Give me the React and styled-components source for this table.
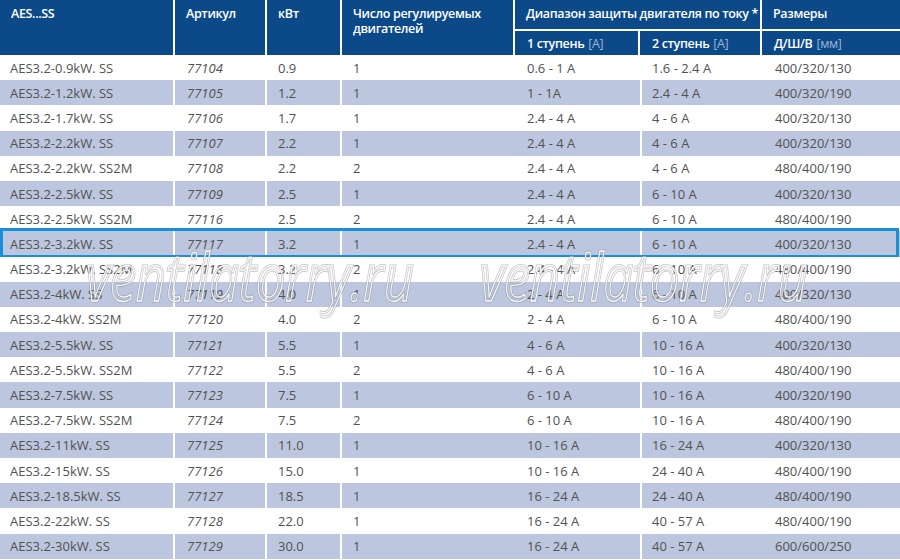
import React from "react";
import styled, { createGlobalStyle } from "styled-components";

const GlobalStyle = createGlobalStyle`
  html, body {
    margin: 0;
    padding: 0;
    background: #ffffff;
  }
  body {
    font-family: "Open Sans", "Liberation Sans", sans-serif;
  }
`;

const Page = styled.div`
  position: relative;
  width: 900px;
  height: 560px;
  overflow: hidden;
  background: #ffffff;
`;

const Header = styled.div`
  display: grid;
  grid-template-columns: 173px 90px 73px 171px 123px 120px 138px;
  grid-template-rows: 29px 24px;
  column-gap: 2px;
  row-gap: 2px;
  background: #ffffff;
`;

const HeadCell = styled.div`
  background: #0c4988;
  color: #ffffff;
  font-size: 12.5px;
  font-weight: 600;
  letter-spacing: -0.35px;
  line-height: 15px;
  padding: ${(p) => (p.sub ? "0 0 0 12px" : "6px 0 0 11px")};
  display: flex;
  align-items: ${(p) => (p.sub ? "center" : "flex-start")};
  grid-column: ${(p) => p.col || "auto"};
  grid-row: ${(p) => p.row || "auto"};
  white-space: ${(p) => (p.wrap ? "normal" : "nowrap")};
`;

const Unit = styled.span`
  color: #9fb5d6;
  font-weight: 400;
  margin-left: 4px;
`;

const Body = styled.div`
  display: flex;
  flex-direction: column;
`;

const Row = styled.div`
  position: relative;
  display: grid;
  grid-template-columns: 173px 92px 75px 175px 125px 124px 136px;
  height: 25.2px;
  background: ${(p) => (p.shade ? "#bcc6de" : "#ffffff")};

  &::after {
    content: "";
    display: ${(p) => (p.active ? "block" : "none")};
    position: absolute;
    top: -3px;
    bottom: -1px;
    left: 0;
    right: 1px;
    border: 3px solid #1a8fd9;
    pointer-events: none;
  }
`;

const Cell = styled.div`
  display: flex;
  align-items: center;
  padding-left: ${(p) => p.pad || 11}px;
  border-left: ${(p) => (p.line ? "2px solid #ffffff" : "none")};
  color: #525252;
  font-size: 13px;
  font-style: ${(p) => (p.italic ? "italic" : "normal")};
  white-space: nowrap;
`;

const Watermark = styled.div`
  position: absolute;
  top: 255px;
  left: ${(p) => p.x}px;
  font-family: "Open Sans", sans-serif;
  font-style: italic;
  font-size: 52px;
  line-height: 52px;
  color: transparent;
  -webkit-text-stroke: 2.4px rgba(140, 140, 140, 0.5);
  transform: scaleY(1.28);
  transform-origin: 0 46px;
  pointer-events: none;
  white-space: nowrap;

  &::after {
    content: attr(data-text);
    position: absolute;
    left: 0;
    top: 0;
    -webkit-text-stroke: 1px rgba(255, 255, 255, 0.95);
  }
`;

const rows = [
  ["AES3.2-0.9kW. SS", "77104", "0.9", "1", "0.6 - 1 A", "1.6 - 2.4 A", "400/320/130"],
  ["AES3.2-1.2kW. SS", "77105", "1.2", "1", "1 - 1A", "2.4 - 4 A", "400/320/190"],
  ["AES3.2-1.7kW. SS", "77106", "1.7", "1", "2.4 - 4 A", "4 - 6 A", "400/320/130"],
  ["AES3.2-2.2kW. SS", "77107", "2.2", "1", "2.4 - 4 A", "4 - 6 A", "400/320/130"],
  ["AES3.2-2.2kW. SS2M", "77108", "2.2", "2", "2.4 - 4 A", "4 - 6 A", "480/400/190"],
  ["AES3.2-2.5kW. SS", "77109", "2.5", "1", "2.4 - 4 A", "6 - 10 A", "400/320/130"],
  ["AES3.2-2.5kW. SS2M", "77116", "2.5", "2", "2.4 - 4 A", "6 - 10 A", "480/400/190"],
  ["AES3.2-3.2kW. SS", "77117", "3.2", "1", "2.4 - 4 A", "6 - 10 A", "400/320/130"],
  ["AES3.2-3.2kW. SS2M", "77118", "3.2", "2", "2.4 - 4 A", "6 - 10 A", "480/400/190"],
  ["AES3.2-4kW. SS", "77119", "4.0", "1", "2 - 4 A", "6 - 10 A", "400/320/130"],
  ["AES3.2-4kW. SS2M", "77120", "4.0", "2", "2 - 4 A", "6 - 10 A", "480/400/190"],
  ["AES3.2-5.5kW. SS", "77121", "5.5", "1", "4 - 6 A", "10 - 16 A", "400/320/130"],
  ["AES3.2-5.5kW. SS2M", "77122", "5.5", "2", "4 - 6 A", "10 - 16 A", "480/400/190"],
  ["AES3.2-7.5kW. SS", "77123", "7.5", "1", "6 - 10 A", "10 - 16 A", "400/320/190"],
  ["AES3.2-7.5kW. SS2M", "77124", "7.5", "2", "6 - 10 A", "10 - 16 A", "480/400/190"],
  ["AES3.2-11kW. SS", "77125", "11.0", "1", "10 - 16 A", "16 - 24 A", "400/320/130"],
  ["AES3.2-15kW. SS", "77126", "15.0", "1", "10 - 16 A", "24 - 40 A", "480/400/190"],
  ["AES3.2-18.5kW. SS", "77127", "18.5", "1", "16 - 24 A", "24 - 40 A", "480/400/190"],
  ["AES3.2-22kW. SS", "77128", "22.0", "1", "16 - 24 A", "40 - 57 A", "480/400/190"],
  ["AES3.2-30kW. SS", "77129", "30.0", "1", "16 - 24 A", "40 - 57 A", "600/600/250"],
];

// body separators only sit after col 1, 2, 3 and 5
const cols = [
  { pad: 10 },
  { pad: 12, line: true, italic: true },
  { pad: 11, line: true },
  { pad: 11, line: true },
  { pad: 12 },
  { pad: 10, line: true },
  { pad: 11 },
];

const App = () => {
  return (
    <Page>
      <GlobalStyle />
      <Header>
        <HeadCell col="1" row="1 / 3">AES...SS</HeadCell>
        <HeadCell col="2" row="1 / 3">Артикул</HeadCell>
        <HeadCell col="3" row="1 / 3">кВт</HeadCell>
        <HeadCell col="4" row="1 / 3" wrap>
          Число регулируемых двигателей
        </HeadCell>
        <HeadCell col="5 / 7" row="1">
          Диапазон защиты двигателя по току *
        </HeadCell>
        <HeadCell col="7" row="1">Размеры</HeadCell>
        <HeadCell col="5" row="2" sub>
          1 ступень<Unit>[A]</Unit>
        </HeadCell>
        <HeadCell col="6" row="2" sub>
          2 ступень<Unit>[A]</Unit>
        </HeadCell>
        <HeadCell col="7" row="2" sub>
          Д/Ш/В<Unit>[мм]</Unit>
        </HeadCell>
      </Header>
      <Body>
        {rows.map((r, i) => (
          <Row key={r[1]} shade={i % 2 === 1} active={i === 7}>
            {r.map((v, j) => (
              <Cell key={j} {...cols[j]}>
                {v}
              </Cell>
            ))}
          </Row>
        ))}
      </Body>
      <Watermark x={86} data-text="ventilatorry.ru">
        ventilatorry.ru
      </Watermark>
      <Watermark x={480} data-text="ventilatorry.ru">
        ventilatorry.ru
      </Watermark>
    </Page>
  );
};

export default App;
